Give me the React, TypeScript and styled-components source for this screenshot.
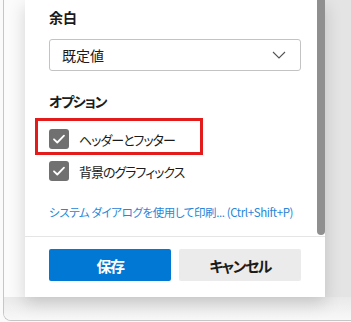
import React from 'react';
import styled, { createGlobalStyle } from 'styled-components';

const GlobalStyle = createGlobalStyle`
  html, body {
    margin: 0;
    padding: 0;
    background: #fafafa;
  }
  body {
    font-family: "Noto Sans CJK JP", "Noto Sans", sans-serif;
    font-feature-settings: "palt";
    color: #1b1b1b;
  }
`;

const Frame = styled.div`
  margin-left: 3px;
  width: 347px;
  height: 320px;
  border-left: 1px solid #c6c6c6;
  border-bottom: 1px solid #c6c6c6;
  border-bottom-left-radius: 8px;
  background: #fbfbfb;
  display: flex;
  flex-direction: column;
  overflow: hidden;
`;

const Row = styled.div`
  display: flex;
  height: 297px;
`;

const Gutter = styled.div`
  width: 21px;
`;

const Panel = styled.div`
  width: 300px;
  background: #fff;
  display: flex;
  flex-direction: column;
  box-shadow: 0 6px 16px rgba(0, 0, 0, 0.16);
  position: relative;
  z-index: 1;
`;

const Preview = styled.div`
  flex: 1;
  background: #e4e4e4;
`;

const BottomShade = styled.div`
  flex: 1;
  background: linear-gradient(#e9e9e9, #f8f8f8);
`;

const ScrollArea = styled.div`
  display: flex;
  height: 236px;
`;

const Content = styled.div`
  flex: 1;
  padding: 7px 0 0 24px;
`;

const ScrollThumb = styled.div`
  width: 8px;
  height: 235px;
  background: #8f8f8f;
  border-radius: 0 0 4px 4px;
`;

const Heading = styled.div<{ $mt?: number; $tight?: boolean }>`
  font-size: 14px;
  line-height: 20px;
  font-weight: 600;
  letter-spacing: ${(p) => (p.$tight ? '-1.2px' : '0')};
  margin-top: ${(p) => p.$mt ?? 0}px;
`;

const Select = styled.div`
  margin-top: 12px;
  width: 252px;
  height: 32px;
  box-sizing: border-box;
  border: 1px solid #c3c3c3;
  border-radius: 3px;
  display: flex;
  align-items: center;
  justify-content: space-between;
  padding: 0 14px 0 12px;
  font-size: 14px;
`;

const CheckList = styled.div`
  margin-top: 18px;
  display: flex;
  flex-direction: column;
  gap: 12px;
`;

const CheckRow = styled.label`
  position: relative;
  display: flex;
  align-items: center;
  gap: 10px;
  height: 20px;
  font-size: 13px;
  letter-spacing: -1px;
`;

const Box = styled.span`
  width: 20px;
  height: 20px;
  border-radius: 3px;
  background: #707070;
  display: flex;
  align-items: center;
  justify-content: center;
`;

const Highlight = styled.span`
  position: absolute;
  left: -14px;
  top: -11px;
  width: 168px;
  height: 37px;
  box-sizing: border-box;
  border: 3px solid #e31b1b;
  pointer-events: none;
`;

const Link = styled.a`
  display: block;
  margin-top: 22px;
  font-size: 11.5px;
  line-height: 18px;
  letter-spacing: -0.4px;
  color: #2a86d8;
  text-decoration: none;
  white-space: nowrap;
`;

const Footer = styled.div`
  border-top: 1px solid #e5e5e5;
  display: flex;
  gap: 8px;
  padding: 12px 0 0 24px;
`;

const Button = styled.button<{ $primary?: boolean }>`
  width: 122px;
  height: 32px;
  border: none;
  border-radius: 2px;
  font-family: inherit;
  font-feature-settings: "palt";
  font-size: 15px;
  font-weight: 700;
  letter-spacing: -1.5px;
  background: ${(p) => (p.$primary ? '#0078d4' : '#ebebeb')};
  color: ${(p) => (p.$primary ? '#fff' : '#1b1b1b')};
`;

function Check() {
  return (
    <Box>
      <svg width="14" height="14" viewBox="0 0 14 14">
        <path d="M2 7.3 L5.3 10.5 L12 3.6" fill="none" stroke="#fff" strokeWidth="1.8" strokeLinecap="round" strokeLinejoin="round" />
      </svg>
    </Box>
  );
}

export default function App() {
  return (
    <>
      <GlobalStyle />
      <Frame>
        <Row>
          <Gutter />
          <Panel>
            <ScrollArea>
              <Content>
                <Heading>余白</Heading>
                <Select>
                  <span>既定値</span>
                  <svg width="14" height="8" viewBox="0 0 14 8">
                    <path d="M1 1 L7 7 L13 1" fill="none" stroke="#555" strokeWidth="1.1" />
                  </svg>
                </Select>
                <Heading $mt={20} $tight>オプション</Heading>
                <CheckList>
                  <CheckRow>
                    <Check />
                    ヘッダーとフッター
                    <Highlight />
                  </CheckRow>
                  <CheckRow>
                    <Check />
                    背景のグラフィックス
                  </CheckRow>
                </CheckList>
                <Link href="#">システム ダイアログを使用して印刷... (Ctrl+Shift+P)</Link>
              </Content>
              <ScrollThumb />
            </ScrollArea>
            <Footer>
              <Button $primary>保存</Button>
              <Button>キャンセル</Button>
            </Footer>
          </Panel>
          <Preview />
        </Row>
        <BottomShade />
      </Frame>
    </>
  );
}
